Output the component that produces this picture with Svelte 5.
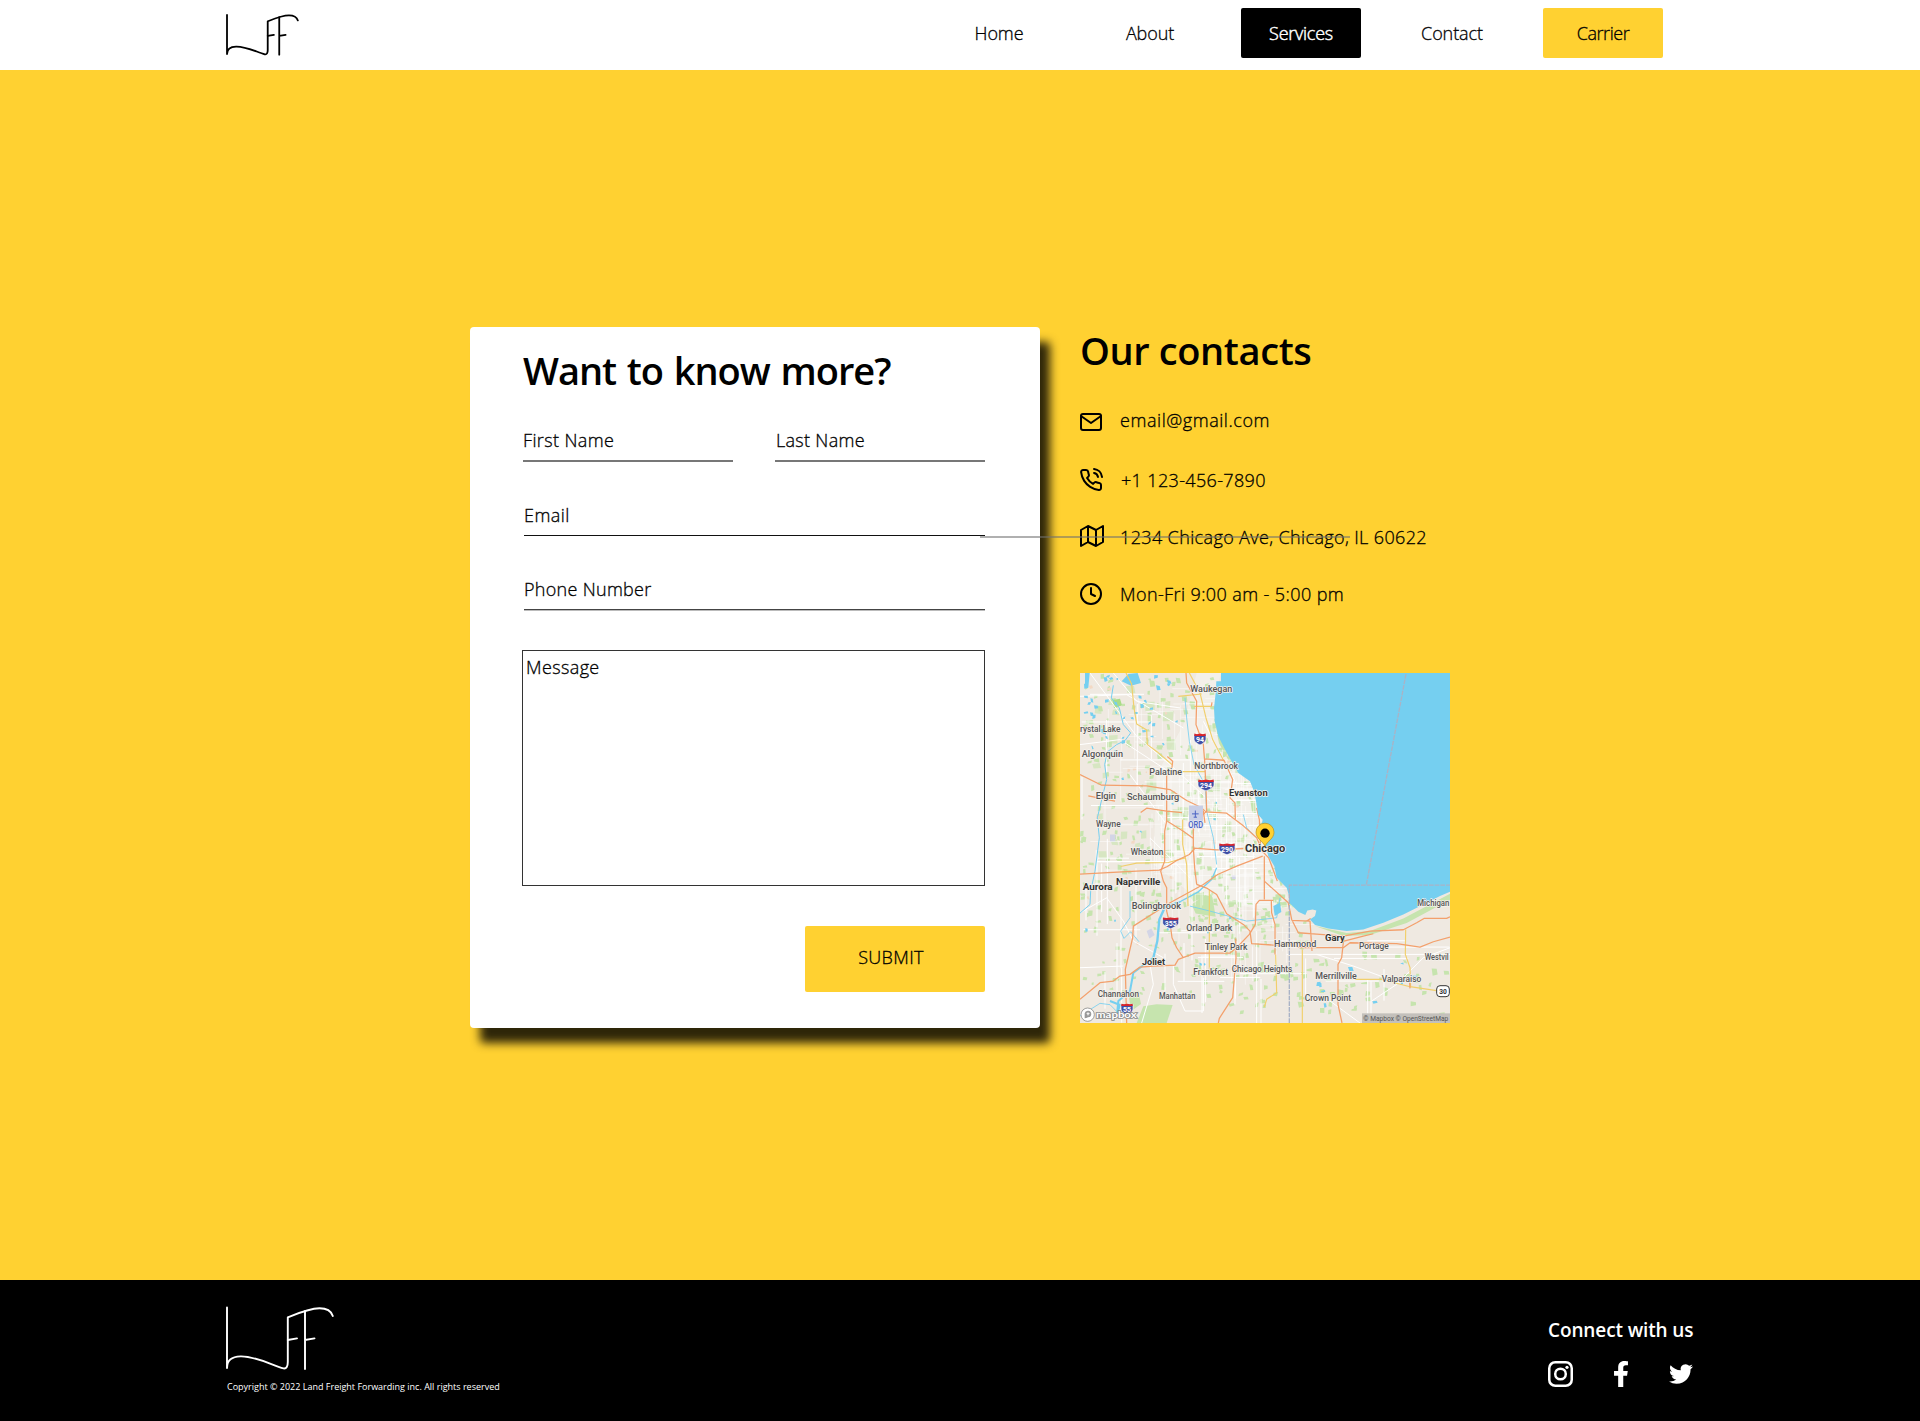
<script>
  const nav = [
    { label: 'Home' },
    { label: 'About' },
    { label: 'Services', kind: 'active' },
    { label: 'Contact' },
    { label: 'Carrier', kind: 'accent' }
  ]

  const contacts = [
    { icon: 'mail', text: 'email@gmail.com' },
    { icon: 'phone', text: '+1 123-456-7890' },
    { icon: 'map', text: '1234 Chicago Ave, Chicago, IL 60622' },
    { icon: 'clock', text: 'Mon-Fri 9:00 am - 5:00 pm' }
  ]

  // Town labels: text, left edge, baseline, width, bold
  const towns = [
    ['Waukegan', 361, 81, 126], ['rystal Lake', 30, 201, 121], ['Algonquin', 35, 276, 124],
    ['Northbrook', 373, 311, 131], ['Palatine', 238, 330, 98], ['Elgin', 77, 402, 61],
    ['Schaumburg', 171, 405, 157], ['Evanston', 477, 394, 116, true], ['Wayne', 78, 486, 74],
    ['Wheaton', 182, 571, 98], ['Chicago', 525, 562, 121, true, 31], ['Naperville', 138, 660, 133, true],
    ['Aurora', 38, 676, 90, true], ['Bolingbrook', 185, 731, 148], ['Orland Park', 349, 799, 138],
    ['Tinley Park', 405, 854, 127], ['Joliet', 216, 900, 69, true], ['Hammond', 612, 846, 127],
    ['Gary', 765, 827, 59, true], ['Portage', 867, 852, 89], ['Frankfort', 370, 930, 104],
    ['Chicago Heights', 485, 920, 182], ['Merrillville', 736, 943, 124], ['Valparaiso', 935, 952, 119],
    ['Channahon', 83, 995, 124], ['Manhattan', 267, 1001, 109], ['Crown Point', 704, 1007, 139],
    ['Michigan', 1042, 724, 96], ['Westvil', 1064, 885, 72]
  ]

  const shields = [
    { n: '94', x: 390, y: 223, w: 36 },
    { n: '294', x: 408, y: 361, w: 48 },
    { n: '290', x: 471, y: 553, w: 48 },
    { n: '355', x: 302, y: 775, w: 48 },
    { n: '55', x: 171, y: 1034, w: 36 }
  ]

  let seed = 41
  const rnd = () => (seed = (seed * 16807) % 2147483647) / 2147483647
  const between = (a, b) => a + rnd() * (b - a)

  function patches(count, size, x0, x1, y0, y1) {
    let d = ''
    for (let i = 0; i < count; i++) {
      const w = between(size * 0.4, size)
      const h = between(size * 0.4, size)
      d += `M${between(x0, x1).toFixed(0)},${between(y0, y1).toFixed(0)}l${w.toFixed(0)},${between(-4, 3).toFixed(0)}l${between(-3, 4).toFixed(0)},${h.toFixed(0)}l${(-w).toFixed(0)},${between(-3, 4).toFixed(0)}z`
    }
    return d
  }

  function streets(count, x0, x1, y0, y1, min, max) {
    let d = ''
    for (let i = 0; i < count; i++) {
      const len = between(min, max)
      const x = between(x0, x1).toFixed(0)
      const y = between(y0, y1).toFixed(0)
      d += i % 2 ? `M${x},${y}h${len.toFixed(0)}` : `M${x},${y}v${len.toFixed(0)}`
    }
    return d
  }

  const parks = patches(340, 16, 30, 640, 25, 800) + patches(110, 16, 380, 720, 690, 1040) + patches(45, 18, 720, 1130, 860, 1060) + patches(35, 13, 30, 380, 800, 1000)
  const woods = patches(34, 34, 30, 500, 40, 560)
  const ponds = patches(38, 12, 40, 320, 30, 240) + patches(18, 8, 30, 500, 240, 900) + patches(10, 13, 700, 1100, 890, 1040)
  const plots = patches(26, 12, 40, 620, 60, 900)
  const thinStreets = streets(150, 240, 570, 280, 690, 40, 160) + streets(80, 60, 540, 60, 640, 40, 150) + streets(44, 470, 680, 660, 860, 40, 120)
  const mainStreets = streets(34, 30, 520, 60, 700, 90, 260) + streets(16, 380, 1000, 800, 960, 80, 240) + streets(9, 30, 360, 780, 960, 80, 220)
</script>

{#snippet logo()}
  <path d="M1.5 1.5V62M1.5 62C1.5 54 6 50.6 15 50.4C30 50 46 59 58 62.4C61 63 62.3 60 62.3 56V11.4C73 7 84 2.3 94 2.3C101 2.3 105.500 4.500 107.300 10" />
  <path d="M79.500 5V63M62.300 34L71.500 32.400M79.500 34L89 32.400" />
{/snippet}

<div class="page">
  <header>
    <svg class="logo" viewBox="0 0 109 65" preserveAspectRatio="none">{@render logo()}</svg>
    <nav>
      {#each nav as item}
        <a class={item.kind} href="#top">{item.label}</a>
      {/each}
    </nav>
  </header>

  <main>
    <form class="card">
      <h1>Want to know more?</h1>
      <div class="names">
        <div class="field half">First Name</div>
        <div class="field half last">Last Name</div>
      </div>
      <div class="field email">Email</div>
      <div class="field tel">Phone Number</div>
      <div class="message">Message</div>
      <button type="button">SUBMIT</button>
      <span class="stray"></span>
    </form>

    <section class="contacts">
      <h2>Our contacts</h2>
      <ul>
        {#each contacts as c}
          <li class={c.icon}>
            <svg class="icon" viewBox="0 0 24 24">
              {#if c.icon === 'mail'}
                <path d="M4 4h16c1.100 0 2 .9 2 2v12c0 1.100-.9 2-2 2H4c-1.100 0-2-.9-2-2V6c0-1.100.9-2 2-2z" />
                <path d="M22 6l-10 7L2 6" />
              {:else if c.icon === 'phone'}
                <path d="M15.050 5A5 5 0 0 1 19 8.950M15.050 1A9 9 0 0 1 23 8.940m-1 7.980v3a2 2 0 0 1-2.180 2 19.790 19.790 0 0 1-8.630-3.070 19.500 19.500 0 0 1-6-6 19.790 19.790 0 0 1-3.070-8.670A2 2 0 0 1 4.110 2h3a2 2 0 0 1 2 1.720 12.840 12.840 0 0 0 .7 2.810 2 2 0 0 1-.45 2.110L8.090 9.910a16 16 0 0 0 6 6l1.270-1.270a2 2 0 0 1 2.110-.45 12.840 12.840 0 0 0 2.810.7A2 2 0 0 1 22 16.920z" />
              {:else if c.icon === 'map'}
                <path d="M1 6v16l7-4 8 4 7-4V2l-7 4-8-4-7 4zM8 2v16M16 6v16" />
              {:else}
                <circle cx="12" cy="12" r="10" />
                <path d="M12 6v6l4 2" />
              {/if}
            </svg>
            <span>{c.text}</span>
          </li>
        {/each}
      </ul>

      <svg class="citymap" viewBox="30 25 1110 1051" preserveAspectRatio="none">
        <rect x="30" y="25" width="1110" height="1051" fill="#efe9e1" />
        <path d="M453 25L438 90 445 215 490 300 552 380 575 465 595 575 620 640 655 700 600 740 380 700 250 600 260 330 340 180 380 25z" fill="#f5f2ee" opacity=".7" />
        <g fill="#c6e4ae">
          <path d={parks} />
          <path d={woods} opacity=".6" />
          <path d="M365 720l40-28 22 5 10 60-60-10z M200 1076l20-50 40-6 48 2-18 54z M175 985l30-6 8 40-30 22z M355 690l30-10 16 18-30 14z" />
          <path d="M735 785L830 806 900 800 1000 762 1140 688V706L1010 776 900 812 820 815z" />
          <path d="M445 170l12 60 30 60 -8 4-32-58-12-60z M540 400l14 10 4 40-12-8z" />
        </g>
        <path d="M128 106l22-4 6 20-24 8z" fill="#a9dc87" />
        <path d={plots} fill="#f3d9c4" />
        <path d="M120 510h16v22h-16zM485 632h12v12h-12zM230 800l14-8 10 20-16 10z" fill="#d3d5e6" />
        <path d={thinStreets} class="street thin" />
        <g class="street">
          <path d={mainStreets} />
          <path d="M30 95L170 90 340 190M60 25L200 215 300 300 420 410M130 25L200 110 330 130M30 240L150 225 310 330M30 745L110 700 160 770 190 830 280 880M30 910L160 905M240 900L250 960 215 1076M310 905V960L345 1040H400V940M495 880V1020M740 870L850 905 1000 960M650 870H1140M780 1010L870 1076M905 1010L980 960 1060 880 1140 850M560 800V1076M240 520L360 640M180 330L290 480M400 170L500 360M440 400V640M470 400V720M500 440V720M525 470V720M550 530V760" />
        </g>
        <g class="river">
          <path d="M130 62L124 100 148 130 160 180 182 205 165 228 140 240 112 262 104 300 110 345 100 385 82 460 88 520 75 620 62 680 60 720 30 746" />
          <path d="M345 100L350 160 358 230 372 300 405 360 410 440 430 520 440 600M520 450l10 40 20 20M180 680v80l-28 40 10 22 20-20 25 30M360 725l60 15 110 30 90-10 10-60M30 1055l60-38 30 4 20 20" stroke-width="2.500" />
          <path d="M440 610L425 645 385 682 330 712 285 728" stroke-width="4" />
          <path d="M330 712L285 728 268 765 262 830 250 880" stroke-width="7" />
          <path d="M250 880L190 925 180 980 145 1010 140 1060M120 1010l30 12-10 30" stroke-width="6" />
        </g>
        <path d="M155 50l20-22 28-3 10 30-30 8zM45 25l14 0-4 44-10 0zM610 725l20-10 4 28-20 12z" fill="#75cff0" />
        <path d={ponds} fill="#75cff0" />
        <g class="yellow">
          <path d="M168 25L185 58 192 130 200 178 230 196 232 240 262 262 306 300M358 25L390 85 408 160 428 225 462 290M325 95L395 88M372 125h52M338 321h68M152 606L200 596 295 594 345 580M338 465V540L350 600 354 725M418 675V915M697 855V1076M855 945h80l85 22 80 12M1007 795L1006 870 1020 910 1022 970M617 870L620 985 590 1005 583 1028" />
        </g>
        <g class="highway">
          <path d="M348 25L350 55 380 110 378 180 400 240 404 290 408 370 410 440 388 460M404 283L462 287 488 345 480 400 495 415 496 465M424 125l2-12" />
          <path d="M30 330L95 362 230 364 300 375 350 408 392 428 408 442 470 446 520 484 560 520 578 560" />
          <path d="M55 394L85 400 135 410M212 444L230 431 290 440 336 444M292 276L308 290 306 308 290 330V470L284 500V590L272 620 280 650 290 670V740L302 790 306 820 320 850 340 880" />
          <path d="M292 470L340 500 370 522M370 490V550L374 610 380 660M372 551L440 556 520 552M405 475L400 440 388 430" />
          <path d="M30 629L200 620 268 617 292 606 320 588 358 570 374 552" />
          <path d="M30 1005L90 955 130 950 150 935 180 930 210 908 250 905 315 902 325 885 375 866 480 866 500 850 538 810 556 780 558 720 568 708 610 708" />
          <path d="M578 575L500 605 443 630 400 660 300 715 190 785 188 820 166 915 170 1076" />
          <path d="M380 660L412 672 440 690 470 748 520 780 540 800 545 838 610 842 660 840 690 850 820 850 840 835 980 838 1050 848 1090 832 1140 818" />
          <path d="M560 430L568 465 572 555 596 580 622 650M583 575V705M583 650L655 715 665 765 685 805 750 810 820 815 900 800 1000 796 1040 775 1062 762 1130 762 1140 757M604 710L605 745 615 780V870M665 768L720 770 726 860M722 762L710 770" />
          <path d="M822 815L815 880 804 900V1020L816 1076M497 822L498 880 488 1000 448 1062 445 1076M822 830L880 815 910 808M1018 940l2 32" />
        </g>
        <path d="M453 25L453 50 439 50 437 85 432 130 434 170 445 215 465 255 490 300 505 325 540 350 552 380 560 420 564 450 578 466 573 490 585 540 595 575 613 605 620 640 650 670 656 690 658 715 685 742 706 752 712 738 728 735 739 738 735 755 720 765 735 782 775 792 830 800 880 795 940 775 1000 750 1060 720 1110 695 1140 682V25z" fill="#75cff0" />
        <path class="border" d="M1008 28L889 661M658 1076V662H1140" />

        <rect x="357" y="423" width="42" height="48" fill="#c9cfe6" />
        <path d="M376 438v20M366 448h20M371 458h10" stroke="#4a63c4" stroke-width="3" fill="none" />
        <text class="town ord" x="355" y="490" textLength="44" lengthAdjust="spacingAndGlyphs">ORD</text>

        {#each shields as s}
          <g transform="translate({s.x} {s.y})">
            <path d="M{-s.w / 2} -14H{s.w / 2}V0C{s.w / 2} 8 8 15 0 18C-8 15 {-s.w / 2} 8 {-s.w / 2} 0z" fill="#3f4fa5" stroke="#fff" stroke-width="2" />
            <path d="M{-s.w / 2 + 1} -16L{-s.w / 4} -14 0 -16 {s.w / 4} -14 {s.w / 2 - 1} -16V-9H{-s.w / 2 + 1}z" fill="#d9252b" />
            <text class="num" y="9">{s.n}</text>
          </g>
        {/each}
        <rect x="1100" y="964" width="38" height="33" rx="10" fill="#fff" stroke="#333" stroke-width="3" />
        <text class="num us" x="1119" y="988">30</text>

        {#each towns as [name, x, y, w, bold, size]}
          <text class="town" class:bold {x} y={y + 1.5} font-size={size ?? 27} textLength={w} lengthAdjust="spacingAndGlyphs">{name}</text>
        {/each}

        <path d="M585 545C578 530 558 522 558 503A27 27 0 0 1 612 503C612 522 592 530 585 545z" fill="#ffd131" stroke="#b98f1c" stroke-width="2" />
        <circle cx="585" cy="506" r="14" />

        <g fill="#fff" stroke="#8a8a8a" stroke-width="2.500">
          <circle cx="53" cy="1051" r="20" />
          <path d="M44 1062V1047a10 10 0 1 1 10 12q-5 3-10 3z" fill="#999" stroke="none" />
          <path d="M54 1042l2 5 5 1-5 2-2 5-2-5-4-2 4-1z" stroke="none" />
          <text class="brand" x="78" y="1060" textLength="122" lengthAdjust="spacingAndGlyphs">mapbox</text>
        </g>
        <rect x="876" y="1047" width="264" height="29" fill="#c3c0bb" />
        <text class="credit" x="880" y="1069" textLength="255" lengthAdjust="spacingAndGlyphs">© Mapbox © OpenStreetMap</text>
      </svg>
    </section>
  </main>

  <footer>
    <div class="brandcol">
      <svg class="logo" viewBox="0 0 109 65">{@render logo()}</svg>
      <p>Copyright © 2022 Land Freight Forwarding inc. All rights reserved</p>
    </div>
    <div class="social">
      <h3>Connect with us</h3>
      <div class="links">
        <svg class="ig" viewBox="0 0 25 26">
          <rect x="1.250" y="1.250" width="22.500" height="23.500" rx="6" />
          <circle cx="12.500" cy="13" r="5.300" />
          <circle class="dot" cx="19" cy="6.300" r="1.600" />
        </svg>
        <svg class="fb" viewBox="22.890 0 274.200 512"><path d="M279.140 288l14.220-92.660h-88.910v-60.130c0-25.350 12.420-50.060 52.240-50.060h40.420V6.260S260.430 0 225.360 0c-73.220 0-121.080 44.380-121.080 124.720v70.620H22.890V288h81.390v224h100.170V288z" /></svg>
        <svg class="tw" viewBox="0 0 24 24"><path d="M23.953 4.570a10 10 0 01-2.825.775 4.958 4.958 0 002.163-2.723c-.951.555-2.005.959-3.127 1.184a4.920 4.920 0 00-8.384 4.482C7.690 8.095 4.067 6.130 1.640 3.162a4.822 4.822 0 00-.666 2.475c0 1.710.870 3.213 2.188 4.096a4.904 4.904 0 01-2.228-.616v.060a4.923 4.923 0 003.946 4.827 4.996 4.996 0 01-2.212.085 4.936 4.936 0 004.604 3.417 9.867 9.867 0 01-6.102 2.105c-.390 0-.779-.023-1.170-.067a13.995 13.995 0 007.557 2.209c9.053 0 13.998-7.496 13.998-13.985 0-.210 0-.420-.015-.630A9.935 9.935 0 0024 4.590z" /></svg>
      </div>
    </div>
  </footer>
</div>

<style>
  :global(body) {
    margin: 0;
    background: #ffd131;
  }
  .page {
    display: flex;
    flex-direction: column;
    width: 1920px;
    height: 1421px;
    overflow: hidden;
    color: #000;
    background: #ffd131;
    font: 300 18px/24px 'Open Sans', 'Noto Sans', sans-serif;
  }
  h1, h2, h3, p, ul { margin: 0; padding: 0; }

  /* Thickens the light face to a semilight */
  nav a, .field, .message, button, li span { -webkit-text-stroke: 0.300px currentColor; }

  header {
    display: flex;
    align-items: flex-start;
    justify-content: space-between;
    box-sizing: border-box;
    height: 70px;
    padding: 8px 257px 0 226px;
    background: #fff;
  }
  .logo {
    fill: none;
    stroke: #000;
    stroke-width: 2.700;
    stroke-linecap: round;
    stroke-linejoin: round;
  }
  header .logo { width: 73px; height: 42px; margin-top: 6px; }
  nav { display: flex; gap: 31px; }
  nav a {
    width: 120px;
    height: 50px;
    border-radius: 2px;
    color: #000;
    line-height: 50px;
    letter-spacing: -0.100px;
    text-align: center;
    text-decoration: none;
  }
  nav a.active { background: #000; color: #fff; letter-spacing: -0.250px; -webkit-text-stroke-width: 0.450px; }
  nav a.accent { background: #ffd131; letter-spacing: -0.450px; }

  main { display: flex; flex: 1; gap: 40px; padding: 257px 0 0 470px; align-items: flex-start; }

  .card {
    position: relative;
    display: flex;
    flex-direction: column;
    box-sizing: border-box;
    width: 570px;
    height: 701px;
    padding: 18px 55px 36px 52px;
    border-radius: 4px;
    background: #fff;
    box-shadow: 10px 15px 10px rgba(0, 0, 0, 0.820);
  }
  h1, h2 { font-size: 38px; line-height: 50px; font-weight: 600; white-space: nowrap; }
  h1 { margin-left: 1px; letter-spacing: -1px; word-spacing: 1.800px; }
  .names { display: grid; grid-template-columns: 210px 210px; gap: 42px; margin: 33px 0 0 1px; }
  .field { box-sizing: border-box; height: 33px; margin-left: 2px; letter-spacing: 0.300px; border-bottom: 1px solid #111; }
  .half { height: 34px; margin-left: 0; letter-spacing: 0.380px; border-bottom: 2px solid #777; }
  .last { text-indent: 1px; letter-spacing: 0.300px; }
  .email { margin-top: 41px; letter-spacing: 0.450px; }
  .tel { margin-top: 41px; border-bottom-color: #444; box-shadow: 0 1px #bbb; }
  .message { box-sizing: border-box; height: 236px; margin-top: 40px; padding: 4px 3px; border: 1px solid #333; letter-spacing: 0.380px; }
  button {
    align-self: flex-end;
    width: 180px;
    height: 66px;
    margin-top: 40px;
    padding: 0 8px 4px 0;
    border: 0;
    border-radius: 2px;
    background: #ffd131;
    color: #000;
    font: inherit;
    letter-spacing: 0.350px;
  }
  .stray {
    position: absolute;
    top: 209px;
    left: 510px;
    z-index: 2;
    width: 370px;
    height: 2px;
    background: rgba(112, 112, 112, 0.550);
  }

  .contacts { width: 370px; margin-top: -2px; }
  h2 { letter-spacing: -0.380px; }
  ul { margin-top: 33px; list-style: none; }
  li { display: grid; grid-template-columns: 24px 1fr; column-gap: 16px; height: 24px; margin-bottom: 33px; letter-spacing: 0.400px; white-space: nowrap; }
  li.mail { margin-bottom: 36px; letter-spacing: 0.560px; }
  li.phone { letter-spacing: 0.350px; }
  li.map { letter-spacing: 0.370px; }
  li.clock { margin-bottom: 0; }
  li.phone span { padding-left: 1px; }
  .icon { width: 24px; height: 24px; margin-left: -1px; fill: none; stroke: #000; stroke-width: 2; stroke-linecap: round; stroke-linejoin: round; }
  .mail .icon { margin-top: 2px; }
  .map .icon { margin: -1px 0 0 0; }

  .citymap { display: block; width: 370px; height: 350px; margin-top: 67px; }
  .street { fill: none; stroke: #fff; stroke-width: 3; stroke-linejoin: round; }
  .thin { stroke-width: 1.800; opacity: 0.800; }
  .river { fill: none; stroke: #75cff0; stroke-width: 3; stroke-linejoin: round; }
  .yellow { fill: none; stroke: #f1cf6c; stroke-width: 3.500; stroke-linejoin: round; }
  .highway { fill: none; stroke: #f3a06c; stroke-width: 3.800; stroke-linejoin: round; }
  .border { fill: none; stroke: #a9b3c6; stroke-width: 4; stroke-dasharray: 14 3; }
  .town { font-family: Roboto, sans-serif; font-weight: 500; fill: #555; stroke: #f7f4ef; stroke-width: 4; paint-order: stroke; stroke-linejoin: round; }
  .town.bold { font-weight: 700; fill: #333; }
  .ord { font-size: 25px; fill: #4a63c4; stroke: #e6e8f2; }
  .num { font: 700 21px Roboto, sans-serif; fill: #fff; text-anchor: middle; }
  .us { font-size: 20px; fill: #333; }
  .brand { font: 700 30px Lato, sans-serif; paint-order: stroke; stroke-width: 5; }
  .credit { font: 400 23px Roboto, sans-serif; fill: #555; }

  footer {
    display: flex;
    justify-content: space-between;
    box-sizing: border-box;
    height: 141px;
    padding: 26px 226px 0 225px;
    background: #000;
    color: #fff;
  }
  footer .logo { display: block; width: 110px; height: 65px; stroke: #fff; stroke-width: 1.900; }
  .brandcol p { margin: 10px 0 0 2px; font-size: 9px; line-height: 12px; font-weight: 400; }
  .social { width: 147px; padding-top: 12px; }
  h3 { padding-left: 1px; font-size: 19px; line-height: 24px; font-weight: 600; letter-spacing: -0.120px; white-space: nowrap; }
  .links { display: flex; align-items: center; justify-content: space-between; margin: 19px 1px 0 1px; fill: #fff; }
  .ig { width: 25px; height: 26px; fill: none; stroke: #fff; stroke-width: 2.500; }
  .ig .dot { fill: #fff; stroke: none; }
  .fb { width: 14px; height: 26px; }
  .tw { width: 24px; height: 24px; }
</style>
